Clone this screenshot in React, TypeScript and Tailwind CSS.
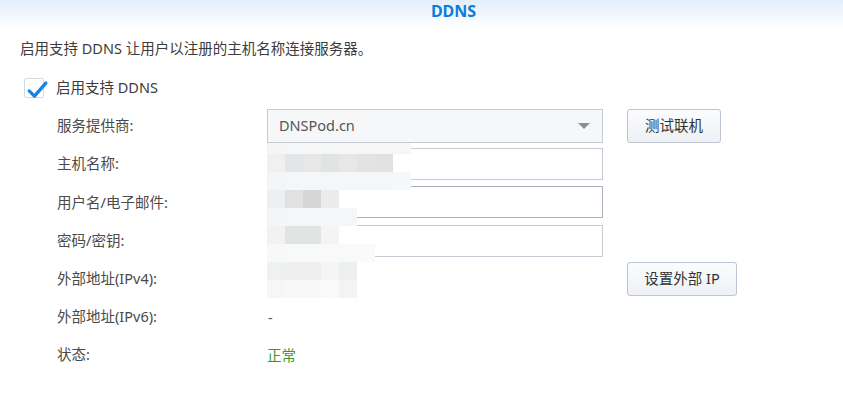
import * as React from "react";

const FONT = {
  fontFamily: '"Noto Sans", "Noto Sans CJK SC", sans-serif',
};

// pixelated privacy mosaic over the host / user / password / IPv4 values
const T = "transparent";
const MOSAIC: { h: number; cells: string[] }[] = [
  { h: 11, cells: ["#f4f5f7", "#f5f6f8", "#f5f6f8", "#f5f6f8", "#f5f6f8", "#f5f6f8", "#f5f6f8", "#f5f6f8"] },
  { h: 18, cells: ["#f0f0f0", "#e3e6e6", "#e6e7e6", "#e2e4e3", "#e6e7e6", "#e2e3e2", "#e0e1e0", T] },
  { h: 18, cells: ["#f4f5f7", "#f5f6f8", "#f5f6f8", "#f5f6f8", "#f5f6f8", "#f5f6f8", "#f5f6f8", "#f6f7f9"] },
  { h: 18, cells: ["#eeeff0", "#e0e1e0", "#d6d6d6", "#ebebeb", T, T, T, T] },
  { h: 18, cells: ["#f4f5f7", "#f5f6f8", "#f5f6f8", "#f5f6f8", "#f5f6f8", T, T, T] },
  { h: 18, cells: ["#f2f2f2", "#e2e3e3", "#e2e3e3", "#f3f4f3", T, T, T, T] },
  { h: 18, cells: ["#f7f8fa", "#f8f9fb", "#f8f9fb", "#f8f9fb", "#f8f9fb", "#f9fafc", T, T] },
  { h: 18, cells: ["#eff0f0", "#eeefee", "#eeefee", "#f5f5f5", "#eef0ef", T, T, T] },
  { h: 18, cells: ["#f6f6f6", "#f8f8f8", "#f8f8f8", "#f9f9f9", "#f2f3f3", T, T, T] },
];

const Mosaic: React.FC = () => (
  <div className="absolute left-[267px] top-[143px] flex flex-col pointer-events-none">
    {MOSAIC.map((row, i) => (
      <div key={i} className="flex">
        {row.cells.map((c, j) => (
          <div key={j} className="w-[18px]" style={{ height: row.h, background: c }} />
        ))}
      </div>
    ))}
  </div>
);

const Button: React.FC<{ children: React.ReactNode; className?: string }> = ({
  children,
  className = "",
}) => (
  <button
    type="button"
    className={`h-[34px] rounded-[3px] border border-[#bcc5d0] bg-gradient-to-b from-[#fbfcfd] to-[#eef1f5] text-[14.5px] text-[#333] ${className}`}
  >
    {children}
  </button>
);

const TextInput: React.FC<{ focused?: boolean }> = ({ focused }) => (
  <div
    className={`h-[32px] w-[336px] border bg-white ${
      focused ? "border-[#aab3bd]" : "border-[#c4cbd4]"
    }`}
  />
);

const Row: React.FC<{
  label: string;
  children?: React.ReactNode;
  action?: React.ReactNode;
}> = ({ label, children, action }) => (
  <div className="flex h-[38.2px] items-center">
    <div className="w-[267px] shrink-0 pl-[57px] text-[14.5px] text-[#4a4a4a]">{label}</div>
    <div className="w-[336px] shrink-0">{children}</div>
    {action && <div className="ml-[24px]">{action}</div>}
  </div>
);

export default function App() {
  return (
    <div className="relative h-[405px] w-[843px] overflow-hidden bg-white" style={FONT}>
      {/* title bar */}
      <div className="flex h-[28px] items-start justify-center bg-gradient-to-b from-[#e3eefb] to-white pl-[64px]">
        <span className="-mt-[1px] text-[16px] font-bold text-[#0b7ddb]">DDNS</span>
      </div>

      <p className="mt-[10px] pl-[20px] text-[14.5px] leading-[20px] text-[#3c3c3c]">
        启用支持 DDNS 让用户以注册的主机名称连接服务器。
      </p>

      <label className="mt-[18px] flex h-[24px] items-center pl-[24px]">
        <span className="relative h-[20px] w-[20px] rounded-[2px] border border-[#d3d9e1] bg-white">
          <svg
            viewBox="0 0 24 24"
            className="absolute left-[1px] top-[1px] h-[21px] w-[23px]"
          >
            <path
              d="M2.5 12.5 L8.5 18.5 L21.5 3.5"
              fill="none"
              stroke="#1585e2"
              strokeWidth="3.8"
              strokeLinecap="round"
              strokeLinejoin="round"
            />
          </svg>
        </span>
        <span className="ml-[12px] text-[14.5px] text-[#3c3c3c]">启用支持 DDNS</span>
      </label>

      <div className="mt-[7px] flex flex-col">
        <Row label="服务提供商:" action={<Button className="w-[94px]">测试联机</Button>}>
          <div className="flex h-[34px] w-[336px] items-center justify-between border border-[#c4cbd4] bg-[#f5f7f9] pl-[11px] pr-[12px]">
            <span className="text-[14.5px] text-[#555]">DNSPod.cn</span>
            <svg viewBox="0 0 12 6" className="h-[6px] w-[12px]">
              <path d="M0 0 L12 0 L6 6 Z" fill="#8a8f96" />
            </svg>
          </div>
        </Row>
        <Row label="主机名称:">
          <TextInput />
        </Row>
        <Row label="用户名/电子邮件:">
          <TextInput focused />
        </Row>
        <Row label="密码/密钥:">
          <TextInput />
        </Row>
        <Row label="外部地址(IPv4):" action={<Button className="w-[110px]">设置外部 IP</Button>} />
        <Row label="外部地址(IPv6):">
          <span className="pl-[1px] text-[14.5px] text-[#555]">-</span>
        </Row>
        <Row label="状态:">
          <span className="text-[14.5px] text-[#3a9a26]">正常</span>
        </Row>
      </div>

      <Mosaic />
    </div>
  );
}
